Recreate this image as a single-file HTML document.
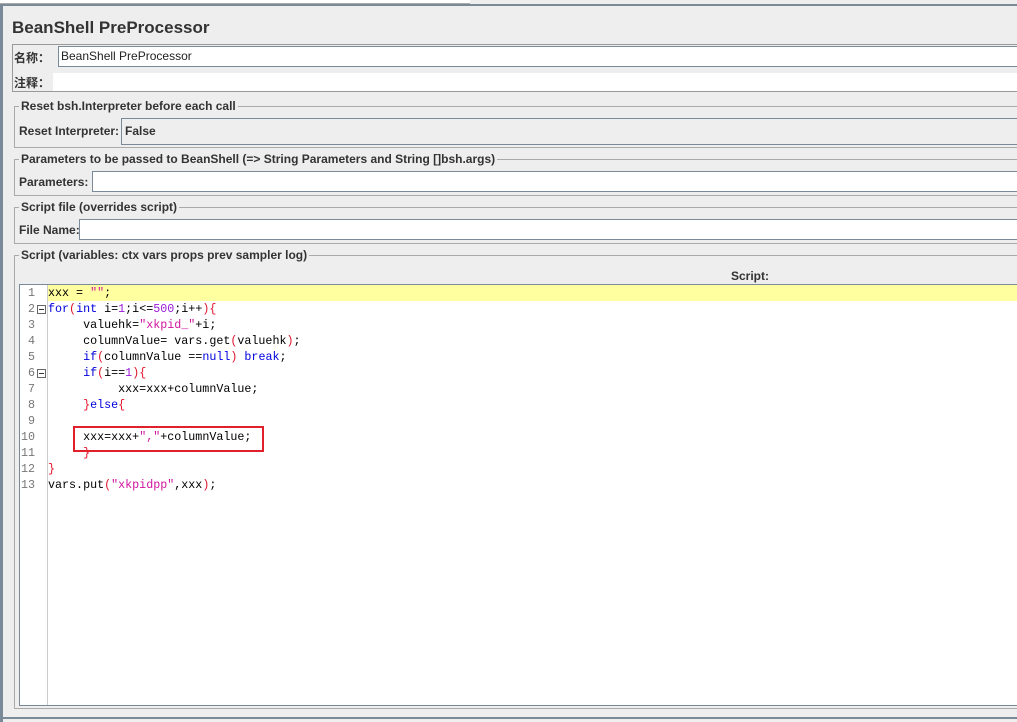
<!DOCTYPE html>
<html><head><meta charset="utf-8"><style>
*{margin:0;padding:0;box-sizing:border-box}
body{width:1017px;height:722px;background:#eeeeee;position:relative;overflow:hidden;font-family:"Liberation Sans","Noto Sans CJK SC",sans-serif;font-size:12px;color:#333}
.a{position:absolute}
.lbl{position:absolute;font-weight:bold;font-size:12px;color:#333;white-space:nowrap}
.grp{position:absolute;border:1px solid #aaa;border-right:none}
.gt{position:absolute;background:#eee;padding:0 2px;font-weight:bold;font-size:12px;color:#333;white-space:nowrap}
.fld{position:absolute;background:#fff;border:1px solid #7a8a99;border-right:none}
pre{font-family:"Liberation Mono",monospace;font-size:11.7px;line-height:16px;color:#000}
.k{color:#0000dd}.s{color:#d0169f}.p{color:#e0142c}.n{color:#9a1ad6}
.ln{position:absolute;left:18px;width:17px;text-align:right;font-family:"Liberation Mono",monospace;font-size:11.7px;line-height:16px;color:#777}
</style></head><body>
<div class="a" style="left:0;top:0;width:470px;height:4px;background:#fff;border-bottom:1px solid #aaa"></div>
<div class="a" style="left:0;top:4px;width:1017px;height:2px;background:#7a8a99"></div>
<div class="a" style="left:0;top:4px;width:3px;height:718px;background:#7a8a99"></div>
<div class="a" style="left:3px;top:717px;width:1014px;height:2px;background:#7a8a99"></div>
<div class="lbl" style="left:12px;top:18px;font-size:17px">BeanShell PreProcessor</div>
<div class="a" style="left:12px;top:44px;width:1005px;height:48px;border:1px solid #999;border-right:none"></div>
<div class="lbl" style="left:14px;top:49px">名称：</div>
<div class="fld" style="left:58px;top:46px;width:959px;height:21px;padding:2px 0 0 2px;font-weight:normal;color:#222">BeanShell PreProcessor</div>
<div class="lbl" style="left:14px;top:74px">注释：</div>
<div class="a" style="left:53px;top:73px;width:964px;height:18px;background:#fff"></div>

<div class="grp" style="left:14px;top:106px;width:1003px;height:42px"></div>
<div class="gt" style="left:19px;top:99px">Reset bsh.Interpreter before each call</div>
<div class="lbl" style="left:19px;top:124px">Reset Interpreter:</div>
<div class="a" style="left:121px;top:118px;width:896px;height:27px;border:1px solid #7a8a99;border-right:none;background:#eee;padding:5px 0 0 3px;font-weight:bold">False</div>

<div class="grp" style="left:14px;top:159px;width:1003px;height:37px"></div>
<div class="gt" style="left:19px;top:152px">Parameters to be passed to BeanShell (=&gt; String Parameters and String []bsh.args)</div>
<div class="lbl" style="left:19px;top:175px">Parameters:</div>
<div class="fld" style="left:92px;top:171px;width:925px;height:21px"></div>

<div class="grp" style="left:14px;top:207px;width:1003px;height:37px"></div>
<div class="gt" style="left:19px;top:200px">Script file (overrides script)</div>
<div class="lbl" style="left:19px;top:223px">File Name:</div>
<div class="fld" style="left:79px;top:219px;width:938px;height:21px"></div>

<div class="grp" style="left:14px;top:255px;width:1003px;height:454px"></div>
<div class="gt" style="left:19px;top:248px">Script (variables: ctx vars props prev sampler log)</div>
<div class="lbl" style="left:731px;top:269px">Script:</div>
<div class="a" style="left:19px;top:284px;width:998px;height:422px;background:#fff;border:1px solid #7a8a99;border-right:none"></div>
<div class="a" style="left:47px;top:285px;width:1px;height:420px;background:#ccc"></div>
<div class="a" style="left:48px;top:285px;width:969px;height:16px;background:#ffffa0"></div>
<div class="ln" style="top:285px">1<br>2<br>3<br>4<br>5<br>6<br>7<br>8<br>9<br>10<br>11<br>12<br>13</div>
<div class="a" style="left:37px;top:305px;width:9px;height:9px;border:1px solid #666;background:#fff"><div class="a" style="left:1px;top:3px;width:5px;height:1px;background:#333"></div></div>
<div class="a" style="left:37px;top:369px;width:9px;height:9px;border:1px solid #666;background:#fff"><div class="a" style="left:1px;top:3px;width:5px;height:1px;background:#333"></div></div>
<pre class="a" style="left:48px;top:285px">xxx = <span class="s">""</span>;
<span class="k">for</span><span class="p">(</span><span class="k">int</span> i=<span class="n">1</span>;i&lt;=<span class="n">500</span>;i++<span class="p">){</span>
     valuehk=<span class="s">"xkpid_"</span>+i;
     columnValue= vars.get<span class="p">(</span>valuehk<span class="p">)</span>;
     <span class="k">if</span><span class="p">(</span>columnValue ==<span class="k">null</span><span class="p">)</span> <span class="k">break</span>;
     <span class="k">if</span><span class="p">(</span>i==<span class="n">1</span><span class="p">){</span>
          xxx=xxx+columnValue;
     <span class="p">}</span><span class="k">else</span><span class="p">{</span>

     xxx=xxx+<span class="s">","</span>+columnValue;
     <span class="p">}</span>
<span class="p">}</span>
vars.put<span class="p">(</span><span class="s">"xkpidpp"</span>,xxx<span class="p">)</span>;</pre>
<div class="a" style="left:73px;top:426px;width:191px;height:26px;border:2px solid #e0202a"></div>
</body></html>
